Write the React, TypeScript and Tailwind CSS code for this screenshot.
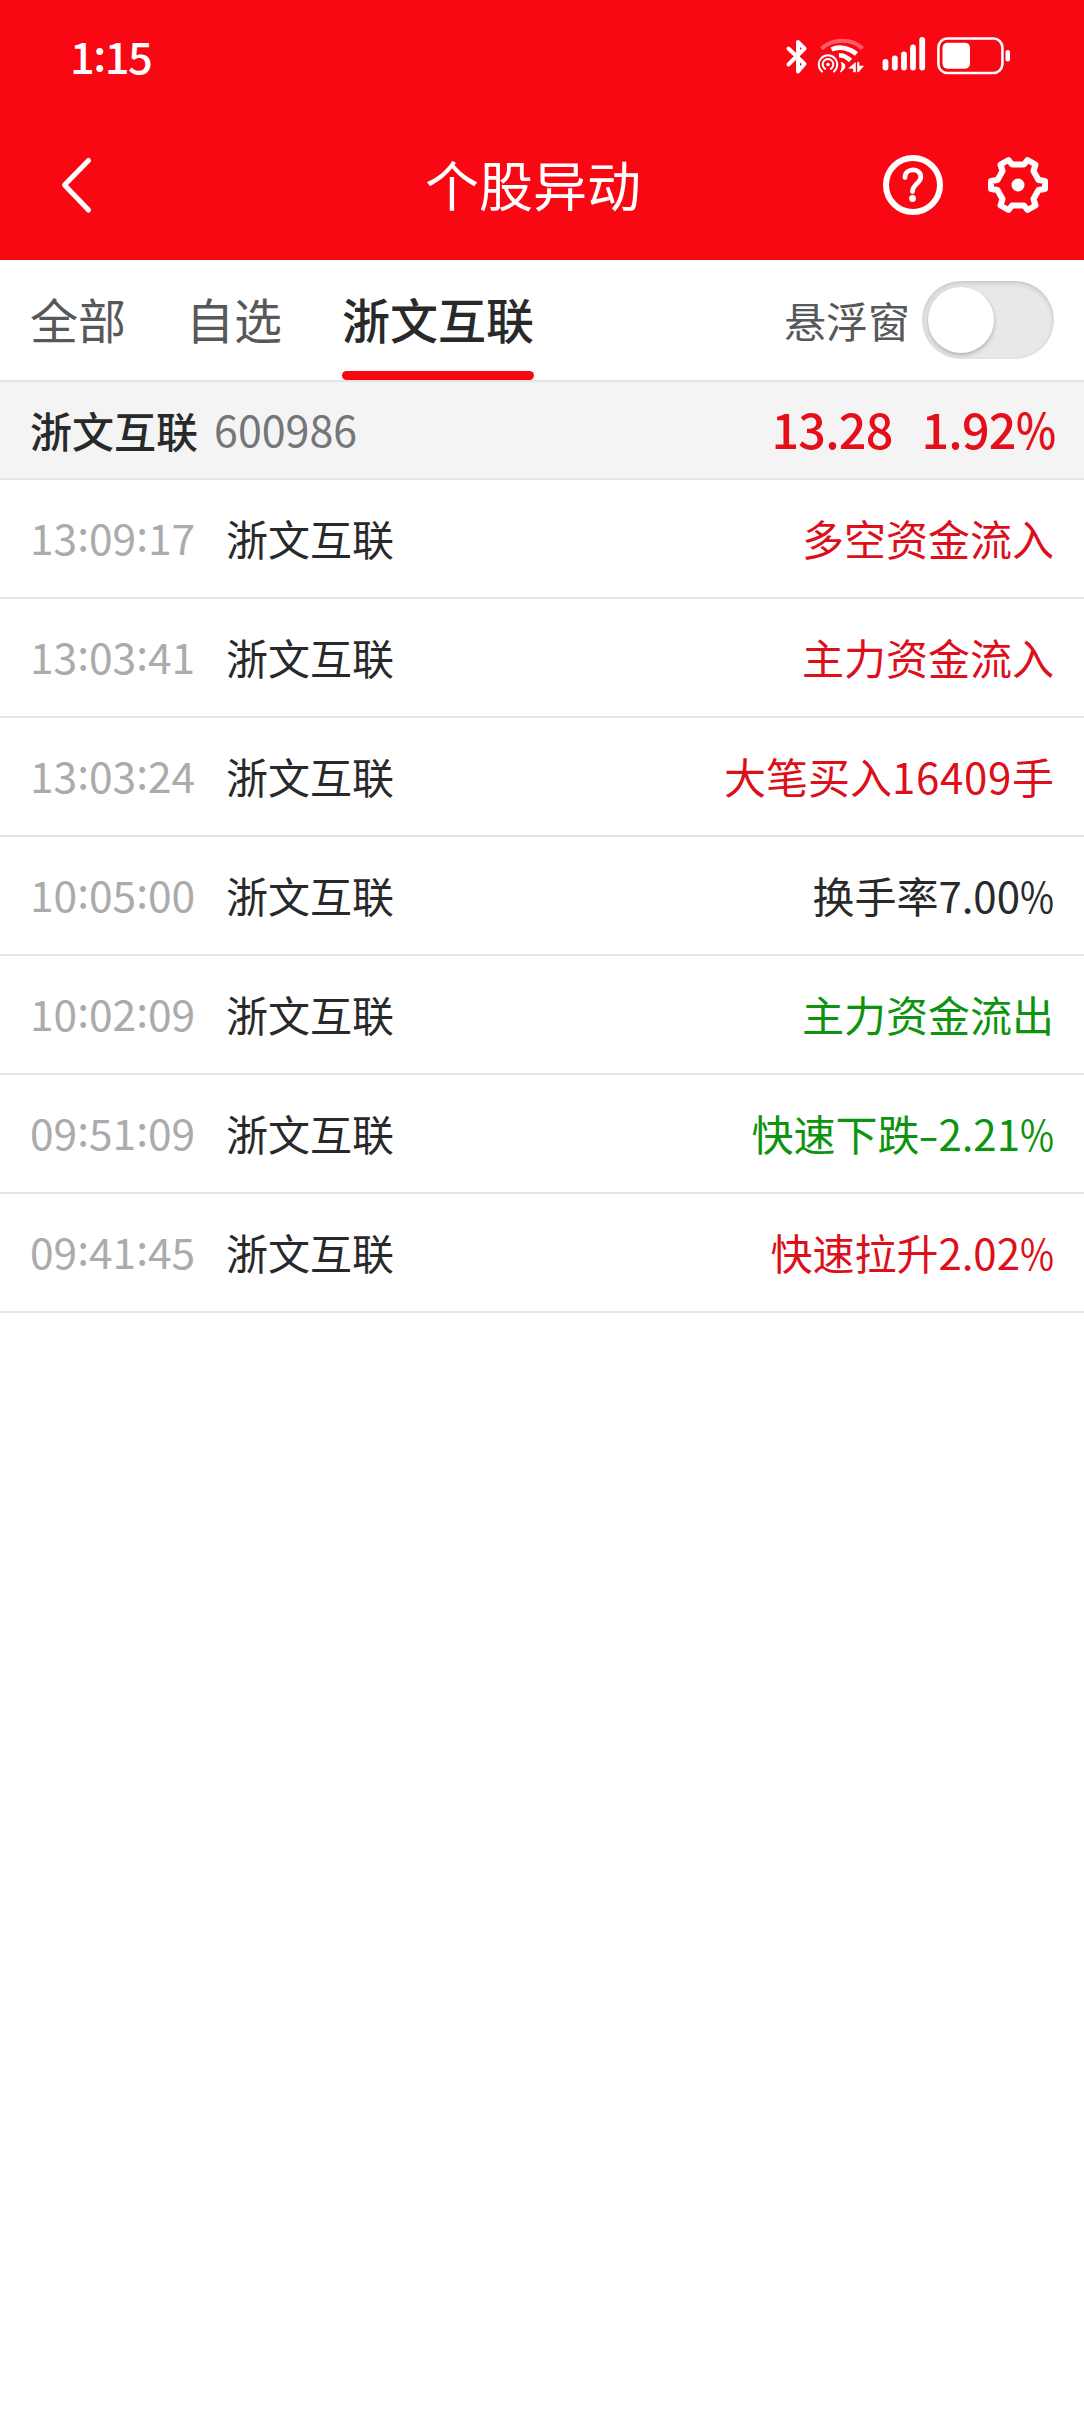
const events = [
  { time: '13:09:17', text: '多空资金流入', tone: 'up' },
  { time: '13:03:41', text: '主力资金流入', tone: 'up' },
  { time: '13:03:24', text: '大笔买入16409手', tone: 'up' },
  { time: '10:05:00', text: '换手率7.00%', tone: 'flat' },
  { time: '10:02:09', text: '主力资金流出', tone: 'down' },
  { time: '09:51:09', text: '快速下跌-2.21%', tone: 'down' },
  { time: '09:41:45', text: '快速拉升2.02%', tone: 'up' },
];

const tones: Record<string, string> = {
  up: 'text-[#dc0f1a]',
  down: 'text-[#0e930e]',
  flat: 'text-[#28292b]',
};

const symbols: Record<string, string> = {
  '%': 'inline-block w-[0.81em] origin-left scale-x-[0.88]',
  '-': 'inline-block w-[0.45em] text-center scale-x-[1.45]',
  ':': 'relative -top-[0.08em]',
};

function Figures({ value }: { value: string }) {
  return (
    <>
      {value.split(/([%:-]|\d{5})/).map((part, i) => {
        const cls = symbols[part] ?? (part.length === 5 && /^\d+$/.test(part) ? 'tracking-[0.7px]' : '');
        return cls ? (
          <span key={i} className={cls}>
            {part}
          </span>
        ) : (
          part
        );
      })}
    </>
  );
}

function StatusIcons() {
  return (
    <svg width="254" height="40" viewBox="0 0 254 40" fill="none" stroke="#fff" strokeLinecap="round" strokeLinejoin="round">
      {/* bluetooth */}
      <path d="M5.500 11.500 L21.500 27 L15 34.500 V5 L21.500 11.500 L5.500 27.500" strokeWidth="4" />
      {/* wifi with hotspot */}
      <g transform="translate(2 0)">
        <path d="M36.500 11.500 C48 1 67 1 77.500 11.500" strokeWidth="4" opacity=".35" strokeLinecap="butt" />
        <path d="M46.500 12.500 C55 8.500 65 11.500 71.500 17" strokeWidth="4.600" strokeLinecap="butt" />
        <path d="M54 18.500 C59 18 62 20 65.500 23.500" strokeWidth="4.600" strokeLinecap="butt" />
        <path d="M37 34.500 A9.200 9.200 0 1 1 49 34.500" strokeWidth="2" />
        <path d="M40.200 31.800 A5.300 5.300 0 1 1 45.800 31.800" strokeWidth="2" />
        <circle cx="43" cy="27.500" r="1.800" fill="#fff" stroke="none" />
        <path d="M56.500 25.500 C61 26.500 61.500 31.500 55.500 35 C57.500 31 57.500 29 56.500 25.500Z" fill="#fff" strokeWidth="1" />
        <path d="M64 31 L70.500 25.500 V35 H68.500 V31.500Z M72.500 25.500 V35 H73.500 L78.500 29 H74V25.500Z" fill="#fff" strokeWidth=".6" />
      </g>
      {/* signal */}
      <g strokeWidth="5.800">
        <path d="M102.500 25 V30.500" />
        <path d="M111.800 21.500 V30.500" />
        <path d="M121 17.500 V30.500" />
        <path d="M130 10.500 V30.500" />
        <path d="M139.200 2.900 V30.500" />
      </g>
      {/* battery */}
      <rect x="155.400" y="1.500" width="64" height="34.500" rx="9" strokeWidth="2.600" />
      <rect x="159.500" y="5.800" width="27.500" height="26" rx="5" fill="#fff" stroke="none" />
      <rect x="222.500" y="13" width="4.500" height="11.500" rx="2" fill="#fff" stroke="none" />
    </svg>
  );
}

function BackIcon() {
  return (
    <svg width="34" height="60" viewBox="0 0 34 60" fill="none" stroke="#fff" strokeWidth="5" strokeLinecap="round" strokeLinejoin="round">
      <path d="M28.500 5.500 L4.500 30 L28.500 55" />
    </svg>
  );
}

function HelpIcon() {
  return (
    <svg width="60" height="60" viewBox="0 0 60 60" fill="none" stroke="#fff">
      <circle cx="30" cy="30" r="27" strokeWidth="6" />
      <path d="M22 22.500 C22 12.500 37.800 12.500 37.800 22 C37.800 28 29.500 29.500 29.500 36.500" strokeWidth="4.800" strokeLinecap="round" />
      <circle cx="29.500" cy="43.500" r="3.400" fill="#fff" stroke="none" />
    </svg>
  );
}

function GearIcon() {
  return (
    <svg width="62" height="62" viewBox="-31 -31 62 62" fill="none" stroke="#fff" strokeWidth="6" strokeLinejoin="round">
      <path d="M-6 -20.500 H6 L9.500 -25 L17.500 -20.500 L15.500 -14 L20.500 -5 L27 -4 V4 L20.500 5 L15.500 14 L17.500 20.500 L9.500 25 L6 20.500 H-6 L-9.500 25 L-17.500 20.500 L-15.500 14 L-20.500 5 L-27 4 V-4 L-20.500 -5 L-15.500 -14 L-17.500 -20.500 L-9.500 -25 Z" />
      <circle r="6.500" fill="#fff" stroke="none" />
    </svg>
  );
}

export default function App() {
  return (
    <div className="flex h-[2412px] w-[1084px] flex-col overflow-hidden bg-white font-['Noto_Sans_CJK_SC',sans-serif] text-[42px] leading-none text-[#28292b]">
      <header className="h-[260px] bg-[#fa0714] text-white">
        <div className="flex h-[112px] items-center justify-between pl-[70px] pr-[47px]">
          <span className="text-[43.500px] font-medium tracking-[-1.500px]">
            <Figures value="1:15" />
          </span>
          <div className="pt-0.5">
            <StatusIcons />
          </div>
        </div>
        <nav className="flex h-[148px] items-center pb-0.5 pl-[60px] pr-[35px]">
          <button className="w-[365px]" aria-label="返回">
            <BackIcon />
          </button>
          <h1 className="whitespace-nowrap pb-0.5 text-[54px]">个股异动</h1>
          <div className="ml-auto flex items-center gap-11">
            <HelpIcon />
            <GearIcon />
          </div>
        </nav>
      </header>

      <div className="flex h-[122px] items-stretch justify-between border-b-2 border-[#e5e5e5] px-[30px]">
        <div className="flex gap-[60px] text-[48px] text-[#575859]">
          <button className="pb-[5px]">全部</button>
          <button className="pb-[5px]">自选</button>
          <button className="flex flex-col font-medium text-[#28292b]">
            <span className="flex h-[111px] items-center pt-1">浙文互联</span>
            <span className="h-[9px] w-full rounded-full bg-[#fa0714]" />
          </button>
        </div>
        <div className="flex items-center gap-3 text-[#575859]">
          <span className="pb-px">悬浮窗</span>
          <div className="flex h-[78px] w-[132px] items-center rounded-full bg-[#e8e8e8] px-1.5 shadow-[inset_0_2px_5px_rgba(0,0,0,0.16)]">
            <div className="size-[66px] rounded-full bg-white shadow-[0_2px_4px_rgba(0,0,0,0.25)]" />
          </div>
        </div>
      </div>

      <div className="flex h-[98px] items-center justify-between border-b-2 border-[#e5e5e5] bg-[#f4f4f4] pb-[3px] pl-[30px] pr-[29px]">
        <div className="flex items-center gap-4">
          <span className="pt-0.5 font-medium">浙文互联</span>
          <span className="text-[43px] text-[#757678]">600986</span>
        </div>
        <div className="flex gap-[29px] text-[48.500px] font-medium tracking-[-0.800px] text-[#e50f1b]">
          <span>13.28</span>
          <span>
            <Figures value="1.92%" />
          </span>
        </div>
      </div>

      <ul>
        {events.map((e) => (
          <li key={e.time} className="flex h-[119px] items-center border-b-2 border-[#e5e5e5] pb-[3px] pl-[30px] pr-[30px]">
            <span className="w-[196px] text-[42.500px] text-[#ababab]">
              <Figures value={e.time} />
            </span>
            <span className="pt-0.5">浙文互联</span>
            <span className={'ml-auto whitespace-nowrap pt-0.5 ' + tones[e.tone]}>
              <Figures value={e.text} />
            </span>
          </li>
        ))}
      </ul>
    </div>
  );
}
